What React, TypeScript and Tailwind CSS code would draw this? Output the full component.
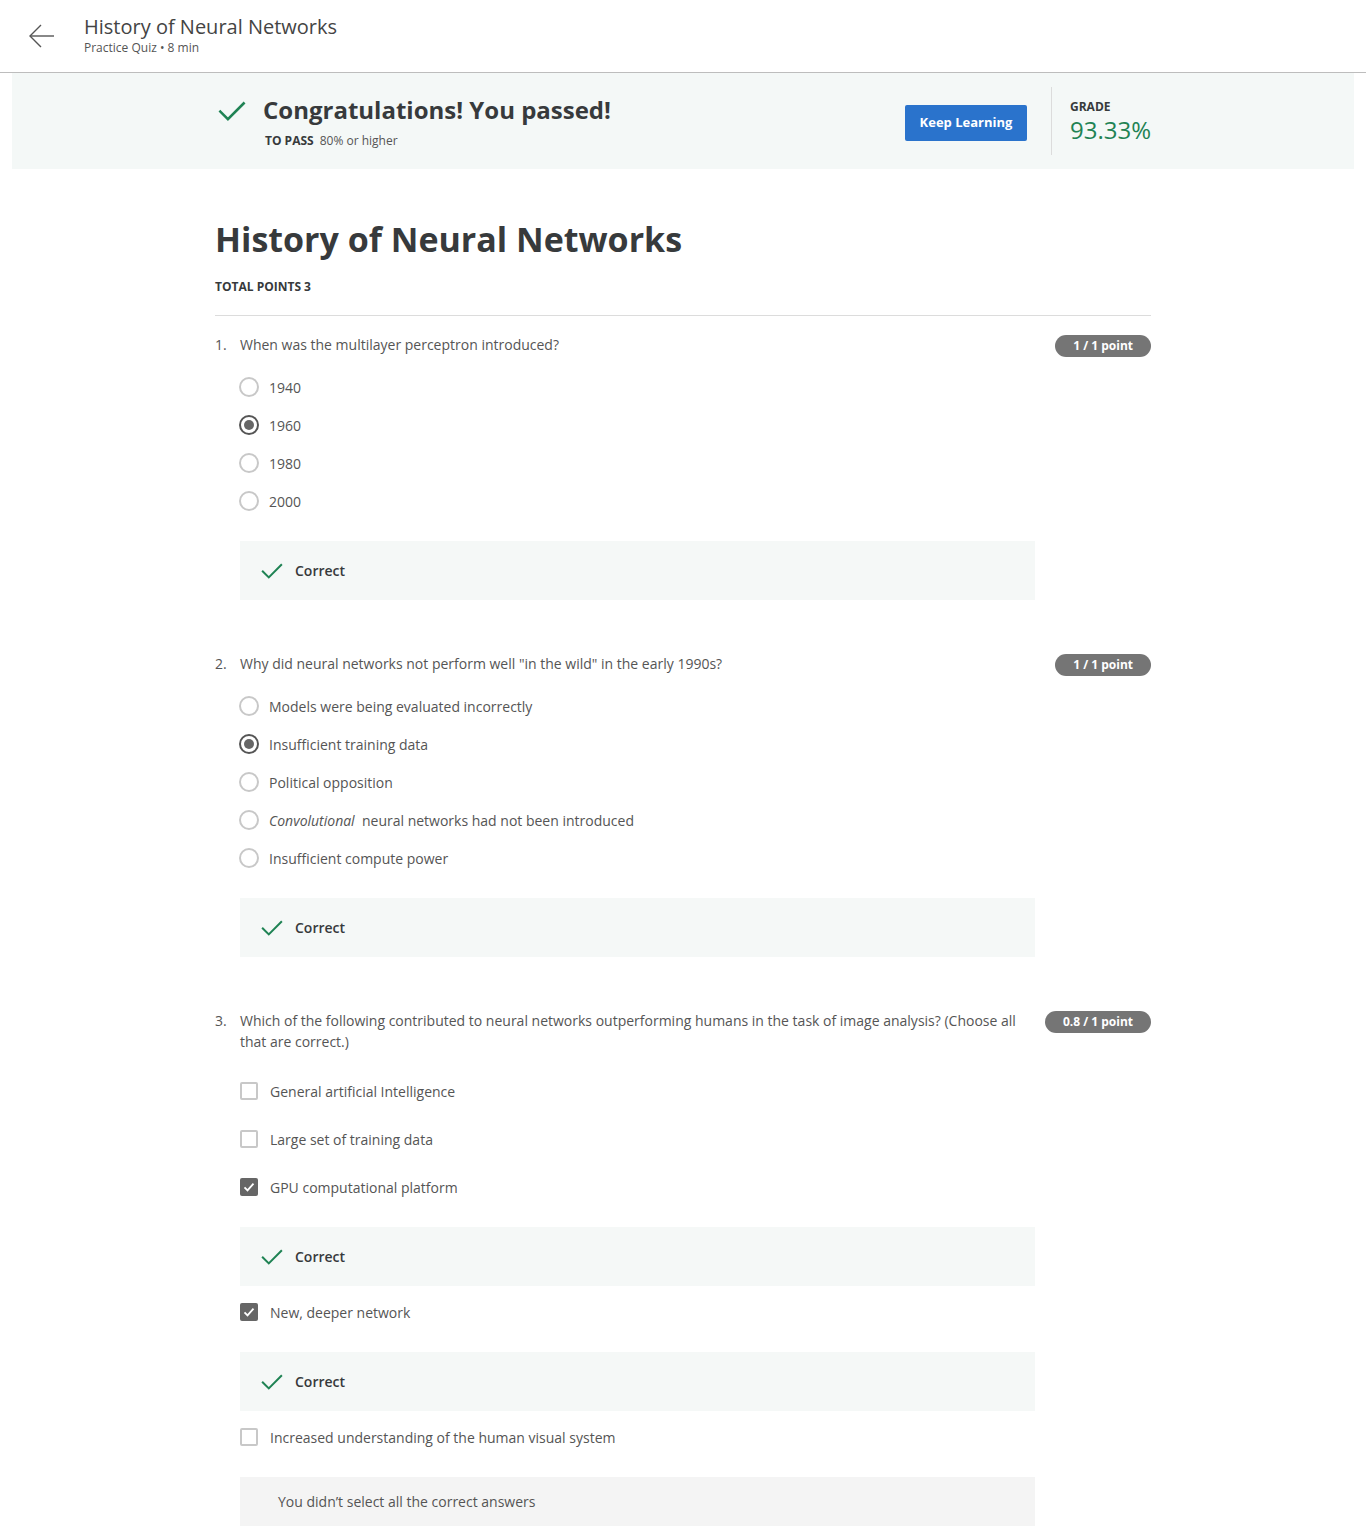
import React from "react";

const font = { fontFamily: '"Open Sans", "Liberation Sans", sans-serif' };

function Check({ className }: { className?: string }) {
  return (
    <svg viewBox="0 0 24 24" className={className} fill="none" stroke="#1f8354" strokeWidth="2.2" strokeLinecap="square">
      <polyline points="2,12.5 8.5,19 22,5.5" />
    </svg>
  );
}

function Radio({ checked }: { checked?: boolean }) {
  if (checked) {
    return (
      <span className="w-5 h-5 rounded-full border-2 border-[#555] flex items-center justify-center shrink-0">
        <span className="w-[10px] h-[10px] rounded-full bg-[#666]" />
      </span>
    );
  }
  return <span className="w-5 h-5 rounded-full border-2 border-[#c8c8c8] shrink-0" />;
}

function Box({ checked }: { checked?: boolean }) {
  if (checked) {
    return (
      <span className="w-[18px] h-[18px] rounded-[2px] bg-[#666] flex items-center justify-center shrink-0">
        <svg viewBox="0 0 16 16" className="w-3 h-3" fill="none" stroke="white" strokeWidth="2.4">
          <polyline points="2,8.5 6,12.5 14,3.5" />
        </svg>
      </span>
    );
  }
  return <span className="w-[18px] h-[18px] rounded-[2px] border-2 border-[#c8c8c8] shrink-0" />;
}

function Correct({ className = "" }: { className?: string }) {
  return (
    <div className={`h-[59px] bg-[#f5f8f7] flex items-center pl-[21px] ${className}`}>
      <Check className="w-[22px] h-[22px]" />
      <span className="ml-3 text-[14px] font-semibold text-[#373a3c]">Correct</span>
    </div>
  );
}

function Badge({ children }: { children: React.ReactNode }) {
  return (
    <span className="h-[22px] px-[18px] rounded-full bg-[#757575] text-white text-[12px] font-bold flex items-center whitespace-nowrap">
      {children}
    </span>
  );
}

function Question({ n, text, points, children }: { n: number; text: React.ReactNode; points: string; children: React.ReactNode }) {
  return (
    <div className="flex">
      <div className="w-[25px] text-[14px] leading-[21px] text-[#555]">{n}.</div>
      <div className="w-[795px]">
        <div className="text-[14px] leading-[21px] text-[#555] pr-4">{text}</div>
        {children}
      </div>
      <div className="flex-1 flex justify-end pt-[1px]">
        <Badge>{points}</Badge>
      </div>
    </div>
  );
}

function RadioRow({ label, checked }: { label: React.ReactNode; checked?: boolean }) {
  return (
    <div className="h-[38px] flex items-center -ml-[1px]">
      <Radio checked={checked} />
      <span className="ml-[10px] text-[14px] text-[#555]">{label}</span>
    </div>
  );
}

function BoxRow({ label, checked, className = "" }: { label: string; checked?: boolean; className?: string }) {
  return (
    <div className={`h-[38px] flex items-center ${className}`}>
      <Box checked={checked} />
      <span className="ml-[12px] text-[14px] text-[#555]">{label}</span>
    </div>
  );
}

export default function App() {
  return (
    <div className="bg-white min-h-[1537px] text-[#373a3c]" style={font}>
      <header className="h-[73px] border-b border-[#bdbdbd] flex items-center">
        <svg viewBox="0 0 28 28" className="w-[28px] h-[28px] ml-[28px]" fill="none" stroke="#555" strokeWidth="1.4">
          <line x1="2" y1="14" x2="26" y2="14" />
          <polyline points="13,3 2,14 13,25" />
        </svg>
        <div className="ml-[28px] -mt-[2px]">
          <div className="text-[20px] leading-[26px] text-[#444]">History of Neural Networks</div>
          <div className="text-[12px] leading-[16px] text-[#555]">Practice Quiz • 8 min</div>
        </div>
      </header>

      <div className="mx-3 h-[96px] bg-[#f4f8f7]">
        <div className="w-[936px] mx-auto h-full flex items-center">
          <Check className="w-[28px] h-[28px] ml-[3px] -mt-[20px]" />
          <div className="ml-[17px]">
            <div className="text-[24px] leading-[32px] font-bold text-[#373a3c]">Congratulations! You passed!</div>
            <div className="mt-[7px] text-[12px] leading-[16px] ml-[2px]">
              <span className="font-bold text-[#373a3c]">TO PASS</span>
              <span className="ml-[6px] text-[#555]">80% or higher</span>
            </div>
          </div>
          <div className="flex-1" />
          <button className="w-[122px] h-[36px] rounded-[2px] bg-[#2a73cc] text-white text-[13px] font-bold mt-[4px]">
            Keep Learning
          </button>
          <div className="w-px h-[68px] bg-[#dcdcdc] ml-[24px]" />
          <div className="ml-[18px] w-[81px] mt-[2px]">
            <div className="text-[12px] leading-[16px] font-bold text-[#373a3c]">GRADE</div>
            <div className="text-[24px] leading-[30px] text-[#1f8354]">93.33%</div>
          </div>
        </div>
      </div>

      <main className="w-[936px] mx-auto pb-[11px]">
        <h1 className="mt-[47px] text-[34px] leading-[46px] font-bold text-[#373a3c]">History of Neural Networks</h1>
        <div className="mt-[17px] text-[12px] leading-[16px] font-bold text-[#373a3c]">TOTAL POINTS 3</div>
        <div className="mt-[20px] border-t border-[#dcdcdc]" />

        <div className="mt-[18px]">
          <Question n={1} text="When was the multilayer perceptron introduced?" points="1 / 1 point">
            <div className="mt-[13px]">
              <RadioRow label="1940" />
              <RadioRow label="1960" checked />
              <RadioRow label="1980" />
              <RadioRow label="2000" />
            </div>
            <Correct className="mt-[21px]" />
          </Question>
        </div>

        <div className="mt-[53px]">
          <Question n={2} text={'Why did neural networks not perform well "in the wild" in the early 1990s?'} points="1 / 1 point">
            <div className="mt-[13px]">
              <RadioRow label="Models were being evaluated incorrectly" />
              <RadioRow label="Insufficient training data" checked />
              <RadioRow label="Political opposition" />
              <RadioRow
                label={
                  <>
                    <em>Convolutional</em>&nbsp; neural networks had not been introduced
                  </>
                }
              />
              <RadioRow label="Insufficient compute power" />
            </div>
            <Correct className="mt-[21px]" />
          </Question>
        </div>

        <div className="mt-[53px]">
          <Question
            n={3}
            text="Which of the following contributed to neural networks outperforming humans in the task of image analysis? (Choose all that are correct.)"
            points="0.8 / 1 point"
          >
            <BoxRow label="General artificial Intelligence" className="mt-[20px]" />
            <BoxRow label="Large set of training data" className="mt-[10px]" />
            <BoxRow label="GPU computational platform" checked className="mt-[10px]" />
            <Correct className="mt-[21px]" />
            <BoxRow label="New, deeper network" checked className="mt-[7px]" />
            <Correct className="mt-[21px]" />
            <BoxRow label="Increased understanding of the human visual system" className="mt-[7px]" />
            <div className="mt-[21px] h-[49px] bg-[#f4f4f4] flex items-center pl-[38px] text-[14px] text-[#555]">
              You didn’t select all the correct answers
            </div>
          </Question>
        </div>
      </main>
    </div>
  );
}
